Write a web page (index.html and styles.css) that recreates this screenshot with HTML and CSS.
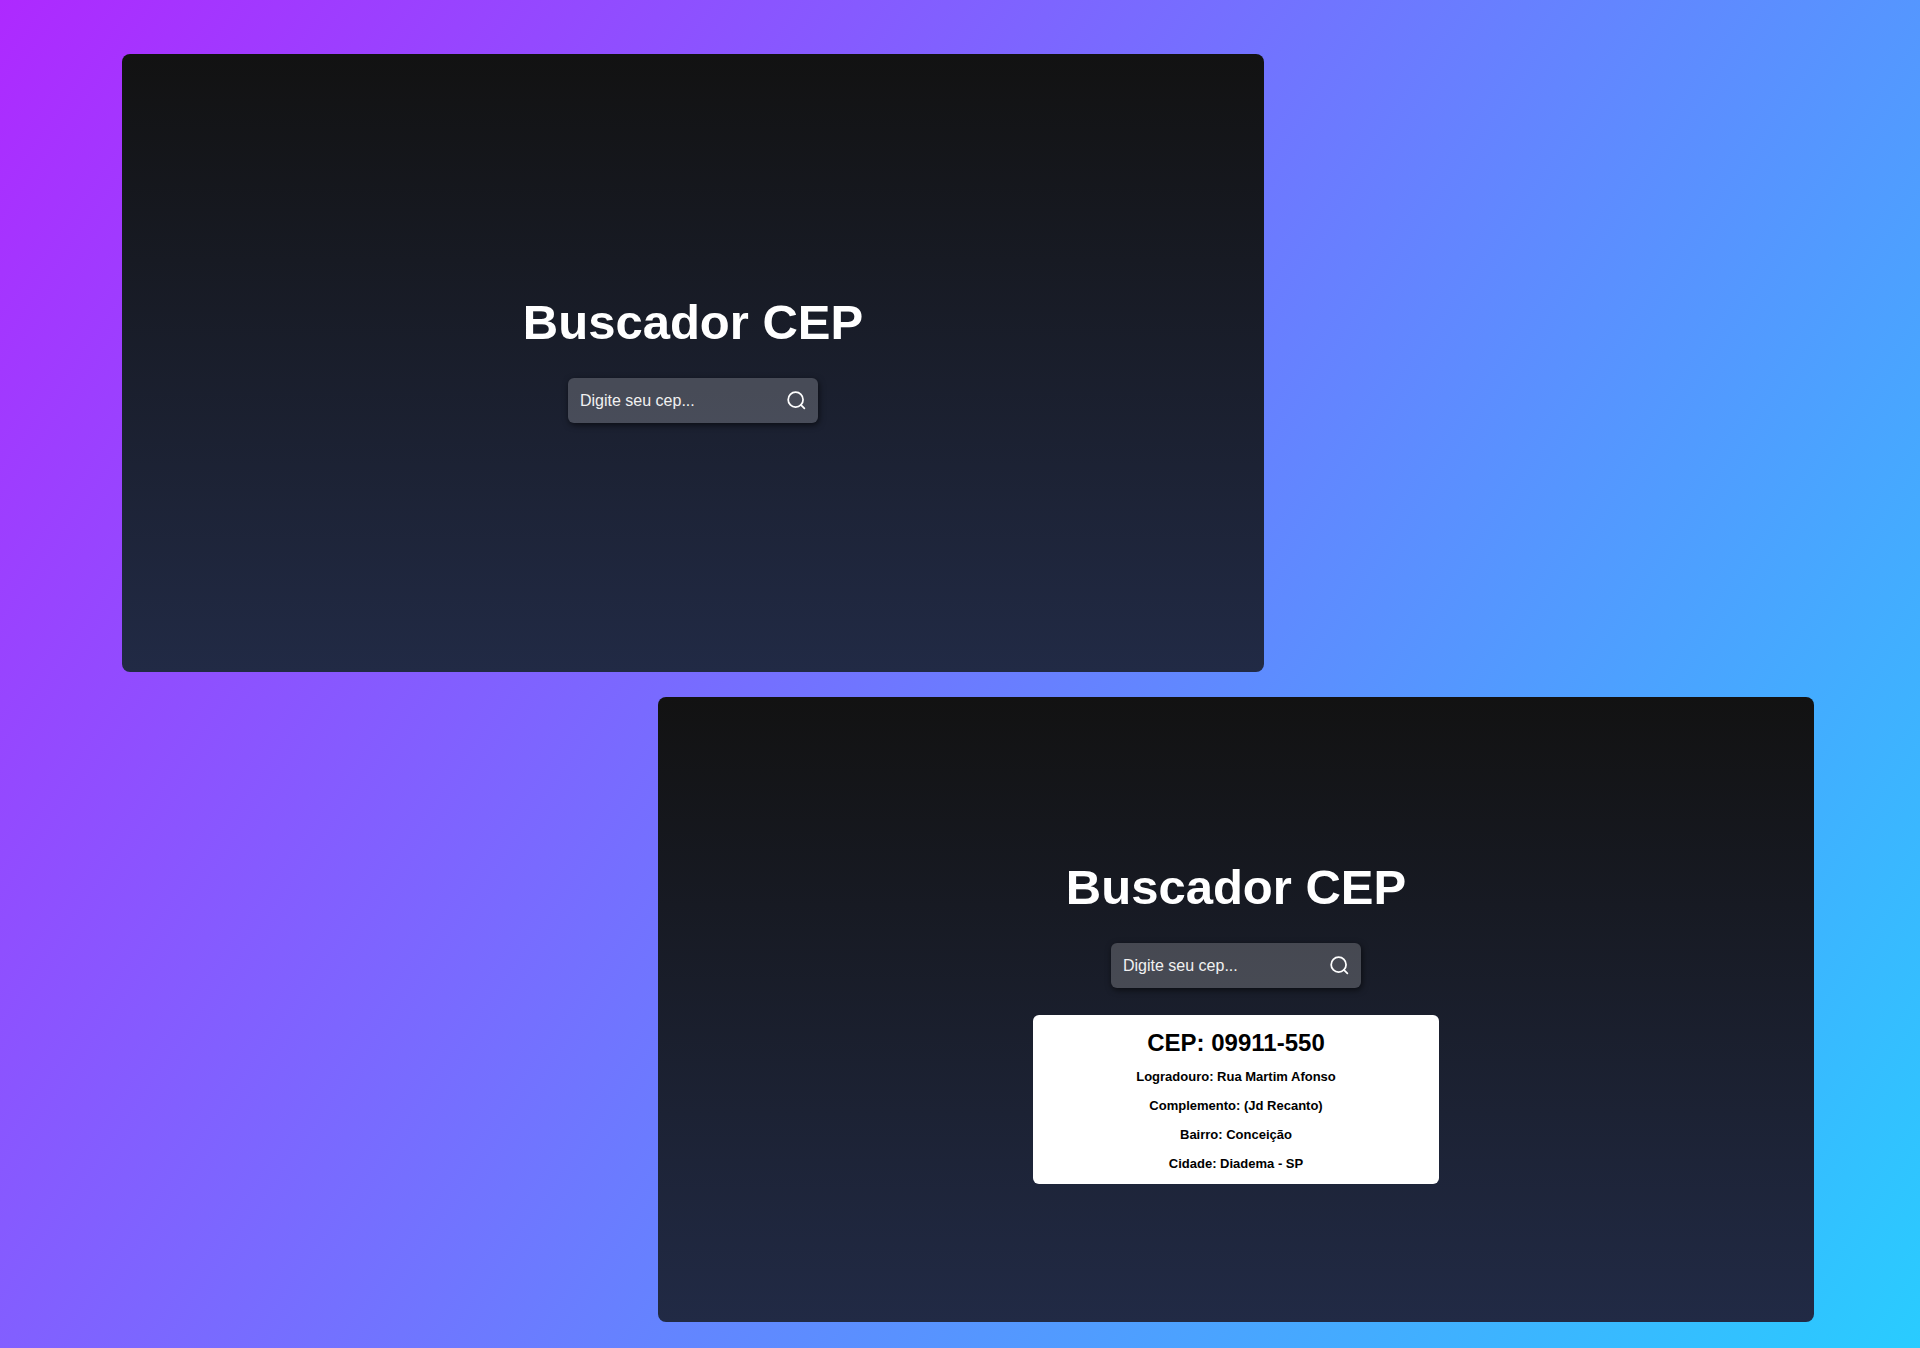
FILE: index.html
```html
<!DOCTYPE html>
<html lang="pt-BR">
<head>
  <meta charset="utf-8">
  <title>Buscador CEP</title>
  <link rel="stylesheet" href="styles.css">
</head>
<body>
  <main class="showcase">
    <section class="screen screen-home">
      <h1 class="title">Buscador CEP</h1>
      <form class="search">
        <input class="search-input" type="text" placeholder="Digite seu cep..." aria-label="CEP">
        <button class="search-button" type="button" aria-label="Buscar">
          <svg class="search-icon" viewBox="0 0 24 24" aria-hidden="true"><circle cx="11" cy="11" r="8.5"/><path d="M21 21l-4-4"/></svg>
        </button>
      </form>
    </section>

    <section class="screen screen-result">
      <h1 class="title">Buscador CEP</h1>
      <form class="search">
        <input class="search-input" type="text" placeholder="Digite seu cep..." aria-label="CEP">
        <button class="search-button" type="button" aria-label="Buscar">
          <svg class="search-icon" viewBox="0 0 24 24" aria-hidden="true"><circle cx="11" cy="11" r="8.5"/><path d="M21 21l-4-4"/></svg>
        </button>
      </form>
      <div class="result">
        <h2 class="result-cep">CEP: 09911-550</h2>
        <p class="result-line">Logradouro: Rua Martim Afonso</p>
        <p class="result-line">Complemento: (Jd Recanto)</p>
        <p class="result-line">Bairro: Conceição</p>
        <p class="result-line">Cidade: Diadema - SP</p>
      </div>
    </section>
  </main>
</body>
</html>
```
FILE: styles.css
```css
* {
  box-sizing: border-box;
  margin: 0;
  padding: 0;
}

body {
  font-family: "Liberation Sans", Arial, sans-serif;
}

.showcase {
  display: grid;
  grid-template-columns: 536fr 606fr 550fr;
  align-content: start;
  row-gap: 25px;
  min-height: 100vh;
  padding: 54px 106px 26px 122px;
  background: linear-gradient(125deg, #ae29ff, #29ccff);
}

.screen {
  display: flex;
  flex-direction: column;
  align-items: center;
  border-radius: 8px;
  background: linear-gradient(180deg, #121212, #212a45);
}

.screen-home {
  grid-column: 1 / 3;
  padding: 247px 0 249px;
}

.screen-result {
  grid-column: 2 / 4;
  padding: 169px 0 138px;
}

.title {
  margin-bottom: 35px;
  color: #fff;
  font-size: 49px;
  line-height: 42px;
}

.search {
  display: flex;
  align-items: center;
  width: 250px;
  height: 45px;
  padding: 0 11px 0 12px;
  border-radius: 6px;
  background: rgba(255, 255, 255, 0.2);
  box-shadow: 1px 2px 6px rgba(0, 0, 0, 0.6);
}

.search-input {
  flex: 1;
  min-width: 0;
  border: 0;
  outline: 0;
  background: transparent;
  color: #fff;
  font: inherit;
  font-size: 16px;
}

.search-input::placeholder {
  color: #f1f1f1;
  opacity: 1;
}

.search-button {
  display: flex;
  border: 0;
  background: transparent;
  color: #fff;
  cursor: pointer;
}

.search-icon {
  width: 21px;
  height: 21px;
  fill: none;
  stroke: currentColor;
  stroke-width: 2;
  stroke-linecap: round;
}

.result {
  display: flex;
  flex-direction: column;
  align-items: center;
  width: 406px;
  margin-top: 27px;
  padding: 12px 0 6px;
  border-radius: 6px;
  background: #fff;
  color: #000;
}

.result-cep {
  margin-bottom: 4px;
  font-size: 24px;
  line-height: 31px;
}

.result-line {
  font-size: 13px;
  font-weight: bold;
  line-height: 29px;
}
```
